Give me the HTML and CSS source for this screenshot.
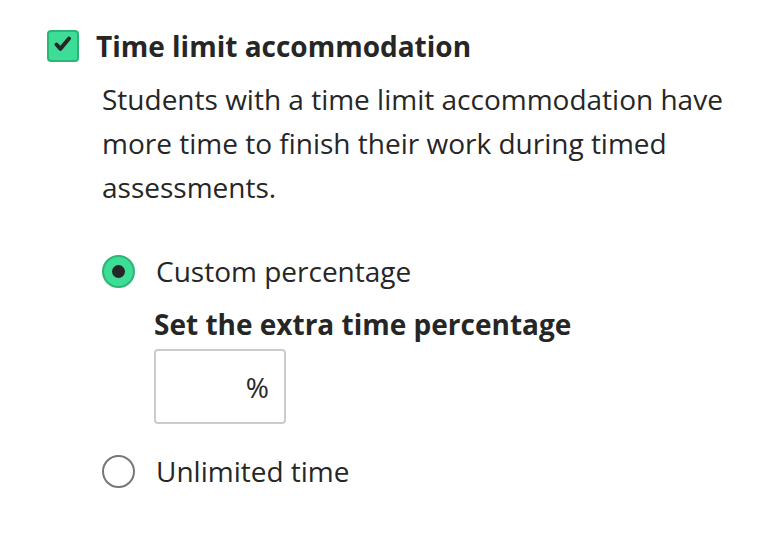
FILE: index.html
```html
<!DOCTYPE html>
<html>
<head>
    <title>Time limit accommodation</title>
    <link rel="stylesheet" href="styles.css">
</head>
<body>
    <div class="setting">
        <label class="setting-head">
            <span class="checkbox">
                <svg width="28" height="28" viewBox="0 0 28 28"><path d="M7.5 12.5 L11.5 16.8 L20 6.5" fill="none" stroke="#262626" stroke-width="4" stroke-linecap="round" stroke-linejoin="round"/></svg>
            </span>
            <span class="setting-title">Time limit accommodation</span>
        </label>
        <p class="setting-desc">Students with a time limit accommodation have more time to finish their work during timed assessments.</p>

        <div class="options">
            <label class="option">
                <span class="radio checked"></span>
                <span class="option-label">Custom percentage</span>
            </label>
            <div class="option-body">
                <div class="field-label">Set the extra time percentage</div>
                <div class="percent-input"><span>%</span></div>
            </div>
            <label class="option">
                <span class="radio"></span>
                <span class="option-label">Unlimited time</span>
            </label>
        </div>
    </div>
</body>
</html>
```

FILE: styles.css
```css
* {
    box-sizing: border-box;
}

body {
    margin: 0;
    background: #fff;
    color: #262626;
    font-family: "Open Sans", "Noto Sans", sans-serif;
}

.setting {
    padding: 30px 0 0 47px;
}

.setting-head {
    display: flex;
    align-items: center;
    gap: 17px;
}

.checkbox {
    width: 32px;
    height: 32px;
    border-radius: 4px;
    background: #3ddc97;
    border: 2px solid #2bb673;
    display: flex;
    align-items: center;
    justify-content: center;
}

.setting-title {
    font-size: 28px;
    font-weight: 700;
    line-height: 32px;
}

.setting-desc {
    margin: 15px 0 0 55px;
    width: 660px;
    font-size: 28px;
    line-height: 44px;
}

.options {
    margin: 43px 0 0 55px;
}

.option {
    display: flex;
    align-items: center;
    gap: 21px;
    height: 38px;
}

.radio {
    width: 33px;
    height: 33px;
    border-radius: 50%;
    border: 2px solid #777;
    background: #fff;
    display: flex;
    align-items: center;
    justify-content: center;
}

.radio.checked {
    background: #3ddc97;
    border-color: #2bb673;
}

.radio.checked:after {
    content: "";
    width: 13px;
    height: 13px;
    border-radius: 50%;
    background: #262626;
}

.option-label {
    font-size: 28px;
    line-height: 38px;
}

.option-body {
    padding: 15px 0 28px 52px;
}

.field-label {
    font-size: 28px;
    font-weight: 700;
    line-height: 38px;
    margin-bottom: 6px;
}

.percent-input {
    width: 132px;
    height: 75px;
    border: 2px solid #ccc;
    border-radius: 4px;
    display: flex;
    align-items: center;
    justify-content: flex-end;
    padding-right: 15px;
    font-size: 28px;
}
```
